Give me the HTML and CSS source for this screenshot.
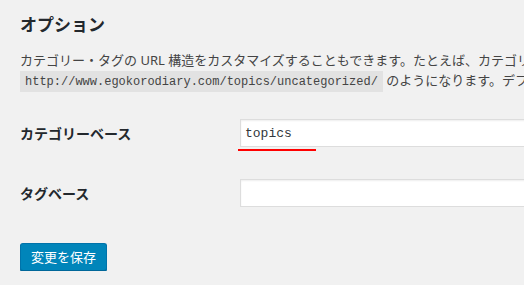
FILE: index.html
```html
<!DOCTYPE html>
<html lang="ja">
<head>
    <meta charset="UTF-8">
    <meta name="viewport" content="width=device-width, initial-scale=1.0">
    <title>パーマリンク設定</title>
    <link rel="stylesheet" href="styles.css">
</head>
<body>
    <div class="wrap">
        <h2>オプション</h2>
        <p class="desc">カテゴリー・タグの URL 構造をカスタマイズすることもできます。たとえば、カテゴリーベースに <code>topics</code> を使えば、カテゴリーのリンクは <code>http://www.egokorodiary.com/topics/uncategorized/</code> のようになります。デフォルトのままにしておく場合は空欄にしてください。</p>

        <div class="form-row">
            <label for="category_base">カテゴリーベース</label>
            <div class="field">
                <input type="text" id="category_base" class="regular-text code" value="topics">
                <span class="mark"></span>
            </div>
        </div>

        <div class="form-row">
            <label for="tag_base">タグベース</label>
            <div class="field">
                <input type="text" id="tag_base" class="regular-text code" value="">
            </div>
        </div>

        <button class="button-primary">変更を保存</button>
    </div>
</body>
</html>
```

FILE: styles.css
```css
body {
    margin: 0;
    background: #f1f1f1;
    color: #444;
    font-family: "Noto Sans", "Noto Sans CJK JP", sans-serif;
    font-size: 13px;
    overflow: hidden;
}
.wrap {
    padding: 0 20px;
    width: 880px;
}
h2 {
    margin: 14px 0 0;
    font-size: 17px;
    line-height: 22px;
    font-weight: 700;
    color: #23282d;
}
.desc {
    margin: 15px 0 13px;
    line-height: 19.5px;
}
code {
    font-family: "Liberation Mono", monospace;
    font-size: 12px;
    line-height: 12px;
    background: #e2e2e2;
    padding: 4px 5px 3px;
    color: #444;
    white-space: nowrap;
}
.form-row {
    display: flex;
    align-items: center;
    padding: 16px 0;
}
.form-row label {
    width: 220px;
    flex: none;
    font-size: 14px;
    font-weight: 600;
    color: #23282d;
}
.field {
    position: relative;
}
input {
    box-sizing: border-box;
    width: 350px;
    height: 28px;
    padding: 0 4px;
    border: 1px solid #ddd;
    background: #fff;
    box-shadow: inset 0 1px 2px rgba(0, 0, 0, .07);
    color: #32373c;
    font-family: "Liberation Mono", monospace;
    font-size: 13px;
    outline: none;
}
.mark {
    position: absolute;
    left: -2px;
    top: 30px;
    width: 78px;
    height: 2px;
    background: #f00;
}
.button-primary {
    margin-top: 20px;
    height: 28px;
    padding: 0 10px 1px;
    background: #0085ba;
    border: 1px solid #0073aa;
    border-bottom-color: #006799;
    border-radius: 3px;
    box-shadow: 0 1px 0 #006799;
    color: #fff;
    font-family: "Noto Sans", "Noto Sans CJK JP", sans-serif;
    font-size: 13px;
    line-height: 26px;
    cursor: pointer;
}
```
